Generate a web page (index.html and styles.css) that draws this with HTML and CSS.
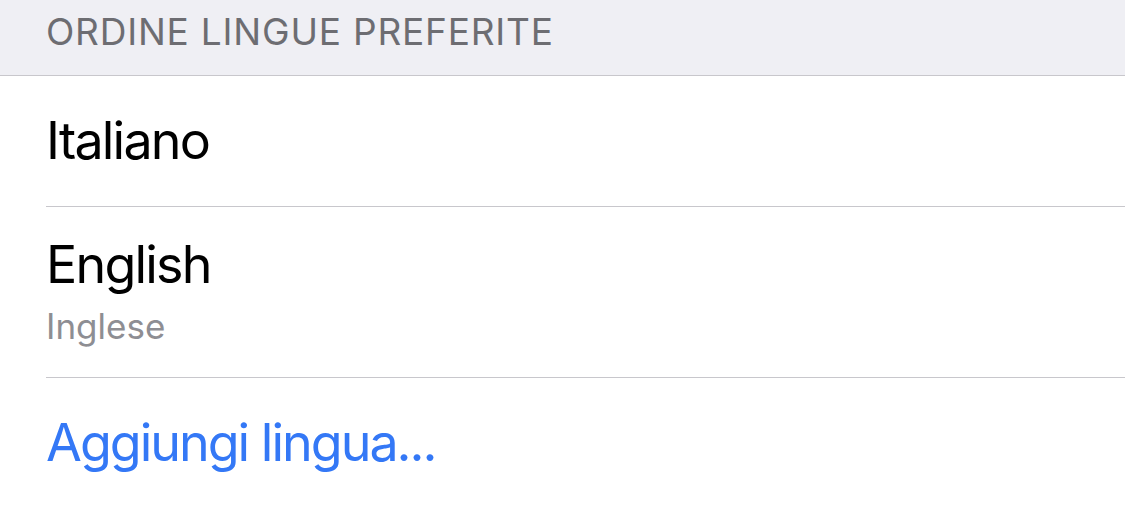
FILE: index.html
```html
<!DOCTYPE html>
<html lang="it">
<head>
<meta charset="utf-8">
<link rel="stylesheet" href="styles.css">
</head>
<body>
<div class="page">
  <div class="section-header">ORDINE LINGUE PREFERITE</div>
  <div class="list">
    <div class="row single">
      <div class="title">Italiano</div>
    </div>
    <div class="row double">
      <div class="title">English</div>
      <div class="subtitle">Inglese</div>
    </div>
    <div class="row single last">
      <div class="action">Aggiungi lingua...</div>
    </div>
  </div>
</div>
</body>
</html>
```
FILE: styles.css
```css
html, body {
  margin: 0;
  padding: 0;
  background: #ffffff;
}
body {
  font-family: Inter, "Noto Sans", "Liberation Sans", sans-serif;
  width: 1125px;
  height: 509px;
  overflow: hidden;
}
.page {
  display: flex;
  flex-direction: column;
}
.section-header {
  background: #efeff4;
  height: 76px;
  box-sizing: border-box;
  padding-left: 46px;
  padding-top: 12px;
  font-size: 37px;
  line-height: 40px;
  letter-spacing: 0.8px;
  color: #6d6d72;
  border-bottom: 1px solid #c8c7cc;
}
.list {
  display: flex;
  flex-direction: column;
  padding-left: 46px;
  background: #fff;
}
.row {
  display: flex;
  flex-direction: column;
  justify-content: center;
  border-bottom: 1px solid #c8c7cc;
}
.row.single {
  height: 130px;
}
.row.double {
  height: 170px;
}
.row.last {
  border-bottom: none;
}
.title {
  font-size: 52px;
  line-height: 60px;
  letter-spacing: -1.8px;
  color: #000;
}
.subtitle {
  margin-top: 8px;
  font-size: 35px;
  line-height: 46px;
  color: #8e8e93;
}
.action {
  font-size: 52px;
  line-height: 60px;
  letter-spacing: -2px;
  color: #3478f6;
}
```
